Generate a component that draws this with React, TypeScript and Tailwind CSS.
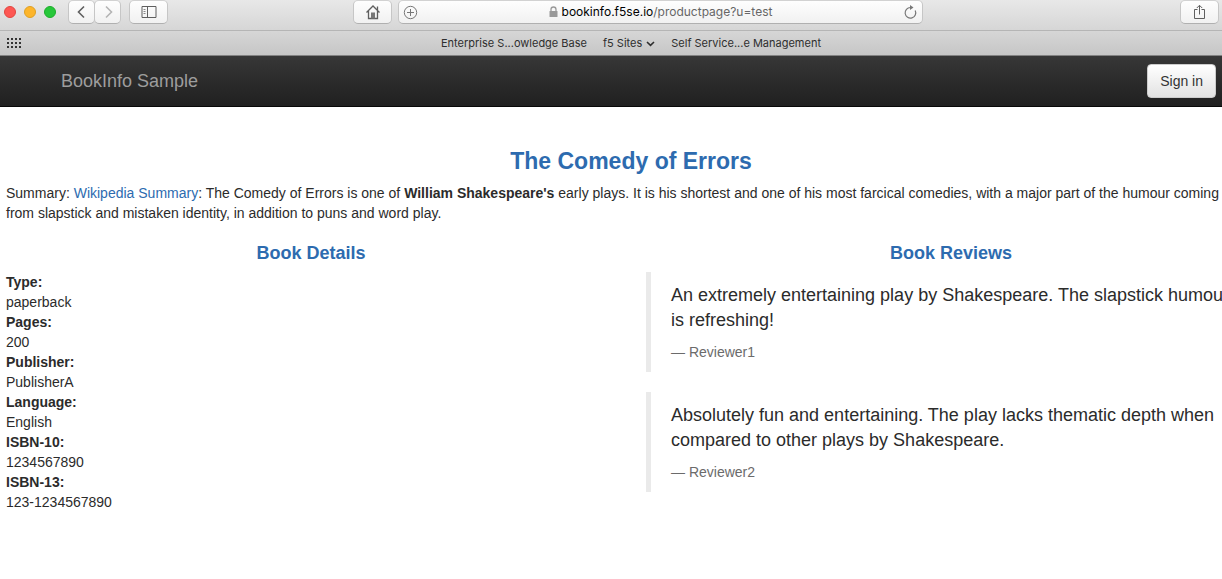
import type { ReactNode } from 'react';

const toolButton =
  'flex h-6 items-center justify-center rounded-[5px] border border-t-[#d2d2d2] border-x-[#c6c6c6] border-b-[#b0b0b0] bg-linear-to-b from-[#fefefe] to-[#f1f1f1] text-[#5f5f5f]';

const details = [
  ['Type:', 'paperback'],
  ['Pages:', '200'],
  ['Publisher:', 'PublisherA'],
  ['Language:', 'English'],
  ['ISBN-10:', '1234567890'],
  ['ISBN-13:', '123-1234567890'],
];

const reviews = [
  {
    text: 'An extremely entertaining play by Shakespeare. The slapstick humour is refreshing!',
    author: 'Reviewer1',
  },
  {
    text: 'Absolutely fun and entertaining. The play lacks thematic depth when compared to other plays by Shakespeare.',
    author: 'Reviewer2',
  },
];

function Icon({ size, children, className = '' }: { size: number; children: ReactNode; className?: string }) {
  return (
    <svg
      width={size}
      height={size}
      viewBox={`0 0 ${size} ${size}`}
      fill="none"
      stroke="currentColor"
      className={className}
      aria-hidden="true"
    >
      {children}
    </svg>
  );
}

function Toolbar() {
  return (
    <div className="flex h-[31px] items-start border-b border-[#b5b5b5] bg-linear-to-b from-[#e8e8e8] to-[#d6d6d6] pr-[3px] pl-1">
      <div className="flex h-6 items-center gap-2">
        <button aria-label="Close" className="size-3 rounded-full border border-[#e2463f] bg-[#fd5753]" />
        <button aria-label="Minimize" className="size-3 rounded-full border border-[#dfa023] bg-[#fdb52b]" />
        <button aria-label="Zoom" className="size-3 rounded-full border border-[#1dad2b] bg-[#27c73a]" />
      </div>
      <div className="ml-3 flex">
        <button aria-label="Back" className={`${toolButton} w-[27px]`}>
          <Icon size={14}>
            <path d="M9 1.500 3.500 7l5.500 5.500" strokeWidth="1.600" />
          </Icon>
        </button>
        <button aria-label="Forward" className={`${toolButton} -ml-px w-[27px]`}>
          <Icon size={14} className="text-[#b4b4b4]">
            <path d="M5 1.500 10.500 7 5 12.500" strokeWidth="1.600" />
          </Icon>
        </button>
      </div>
      <button aria-label="Show sidebar" className={`${toolButton} ml-2 w-[39px]`}>
        <Icon size={16}>
          <path d="M1 2.500h14v11H1zM6.500 2.500v11" />
          <path d="M2.500 5.500h2M2.500 7.500h2M2.500 9.500h2" stroke="#888" />
        </Icon>
      </button>
      <button aria-label="Home" className={`${toolButton} ml-[185px] w-[39px]`}>
        <Icon size={16}>
          <path d="M1.500 8.500 8 2l6.500 6.500M3.500 7v7.500h9V7M12.500 6V2.500" strokeWidth="1.300" />
          <path d="M6 8.500h4v6H6z" fill="#777" stroke="none" />
        </Icon>
      </button>
      <div className="relative ml-[6px] flex-1">
        <button aria-label="Address" className={`${toolButton} w-full`}>
          <svg width="9" height="12" viewBox="0 0 9 12" className="mr-1" aria-hidden="true">
            <path d="M2 5.500V3.500a2.500 2.500 0 0 1 5 0v2" fill="none" stroke="#999" strokeWidth="1.300" />
            <rect x="0.500" y="5" width="8" height="6" rx="0.500" fill="#999" />
          </svg>
          <span className="text-xs text-black">bookinfo.f5se.io</span>
          <span className="text-xs text-[#666]">/productpage?u=test</span>
        </button>
        <button aria-label="Add bookmark" className="absolute top-[5px] left-[5px] text-[#777]">
          <Icon size={15}>
            <circle cx="7.500" cy="7.500" r="6.200" />
            <path d="M4 7.500h7M7.500 4v7" />
          </Icon>
        </button>
        <button aria-label="Reload" className="absolute top-[5px] right-[5px] text-[#777]">
          <Icon size={15}>
            <path d="M12.200 5.500A5.300 5.300 0 1 1 7.500 2.500" strokeWidth="1.200" />
            <path d="M7 0v5L10.500 2.500z" fill="currentColor" stroke="none" />
          </Icon>
        </button>
      </div>
      <button aria-label="Share" className={`${toolButton} ml-[257px] w-[39px]`}>
        <Icon size={16}>
          <path d="M5.500 5.500h-3v9h10v-9h-3M7.500 10.500v-9M4.800 4 7.500 1.300 10.200 4" />
        </Icon>
      </button>
    </div>
  );
}

function BookmarksBar() {
  return (
    <div className="flex h-[25px] items-center border-b border-[#828282] bg-linear-to-b from-[#d6d6d6] to-[#c6c6c6] px-[6px] text-[11px] text-[#2e2e2e]">
      <button aria-label="Show favorites">
        <svg width="16" height="12" viewBox="0 0 16 12" fill="#333" aria-hidden="true">
          {[1, 5, 9].map((y) => [1, 5, 9, 13].map((x) => <rect key={`${x}-${y}`} x={x} y={y} width="2" height="2" />))}
        </svg>
      </button>
      <nav className="flex flex-1 justify-center gap-4 pl-6">
        <a href="#kb">Enterprise S...owledge Base</a>
        <button className="flex items-center gap-1">
          f5 Sites
          <Icon size={9}>
            <path d="M1 3 4.500 6.300 8 3" strokeWidth="1.600" />
          </Icon>
        </button>
        <a href="#self-service">Self Service...e Management</a>
      </nav>
    </div>
  );
}

export default function App() {
  return (
    <div className="min-h-screen overflow-hidden bg-white font-['Liberation_Sans',Arial,sans-serif] text-sm leading-5 text-[#2b2b2b]">
      <div className="font-[Inter,sans-serif]">
        <Toolbar />
        <BookmarksBar />
      </div>
      <header className="flex h-[51px] items-center justify-between border-b border-[#080808] bg-linear-to-b from-[#373737] to-[#202020] pr-[6px] pl-[61px]">
        <a href="#home" className="text-lg text-[#9d9d9d]">
          BookInfo Sample
        </a>
        <button className="h-[34px] rounded-sm border border-[#ccc] bg-linear-to-b from-white to-[#e2e2e2] px-3 text-[#333]">
          Sign in
        </button>
      </header>
      {/* The fluid container runs past the right edge of the window. */}
      <main className="-mr-[34px] pt-10 pl-[6px]">
        <h1 className="text-center text-[23px] leading-7 font-bold text-[#2d6baf]">The Comedy of Errors</h1>
        <p className="mt-2 pr-4">
          Summary:{' '}
          <a href="#summary" className="text-[#2d6baf]">
            Wikipedia Summary
          </a>
          : The Comedy of Errors is one of <b>William Shakespeare's</b> early plays. It is his shortest and one of his
          most farcical comedies, with a major part of the humour coming from slapstick and mistaken identity, in
          addition to puns and word play.
        </p>
        <div className="mt-5 grid grid-cols-2 gap-[30px]">
          <section>
            <h2 className="text-center text-lg leading-5 font-bold text-[#2d6baf]">Book Details</h2>
            <dl className="mt-[9px]">
              {details.map(([term, value]) => (
                <div key={term}>
                  <dt className="font-bold">{term}</dt>
                  <dd>{value}</dd>
                </div>
              ))}
            </dl>
          </section>
          <section>
            <h2 className="text-center text-lg leading-5 font-bold text-[#2d6baf]">Book Reviews</h2>
            <div className="mt-[9px] flex flex-col gap-5">
              {reviews.map((review) => (
                <blockquote key={review.author} className="border-l-[5px] border-[#eaeaea] px-5 pt-[11px] pb-[10px]">
                  <p className="text-lg leading-[25px]">{review.text}</p>
                  <footer className="mt-[9px] text-[#6b6b6b]">— {review.author}</footer>
                </blockquote>
              ))}
            </div>
          </section>
        </div>
      </main>
    </div>
  );
}
